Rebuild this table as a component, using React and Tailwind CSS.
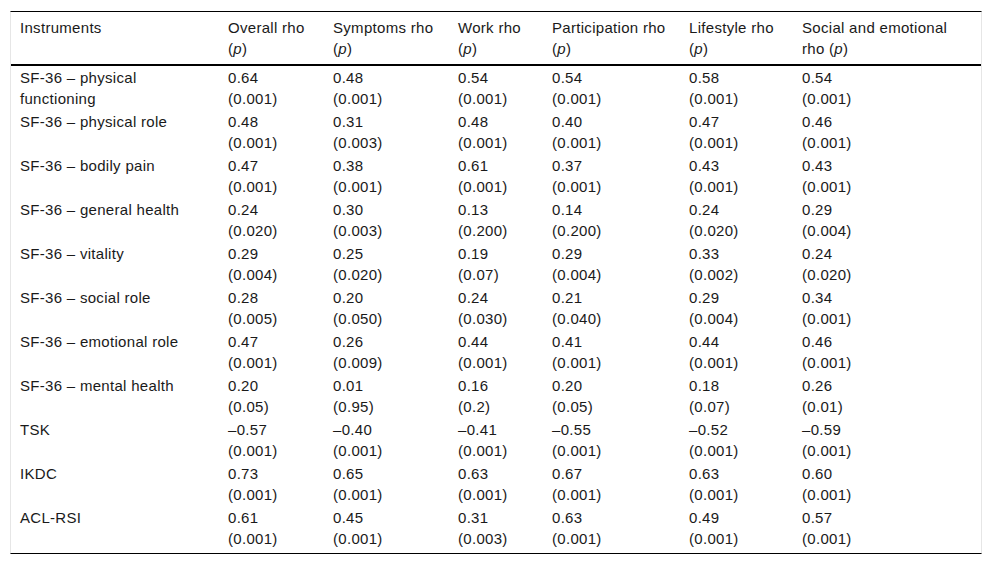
const headers = [
  ["Instruments", null],
  ["Overall rho", "("],
  ["Symptoms rho", "("],
  ["Work rho", "("],
  ["Participation rho", "("],
  ["Lifestyle rho", "("],
  ["Social and emotional", "rho ("],
];

const rows = [
  ["SF-36 – physical functioning", ["0.64", "(0.001)"], ["0.48", "(0.001)"], ["0.54", "(0.001)"], ["0.54", "(0.001)"], ["0.58", "(0.001)"], ["0.54", "(0.001)"]],
  ["SF-36 – physical role", ["0.48", "(0.001)"], ["0.31", "(0.003)"], ["0.48", "(0.001)"], ["0.40", "(0.001)"], ["0.47", "(0.001)"], ["0.46", "(0.001)"]],
  ["SF-36 – bodily pain", ["0.47", "(0.001)"], ["0.38", "(0.001)"], ["0.61", "(0.001)"], ["0.37", "(0.001)"], ["0.43", "(0.001)"], ["0.43", "(0.001)"]],
  ["SF-36 – general health", ["0.24", "(0.020)"], ["0.30", "(0.003)"], ["0.13", "(0.200)"], ["0.14", "(0.200)"], ["0.24", "(0.020)"], ["0.29", "(0.004)"]],
  ["SF-36 – vitality", ["0.29", "(0.004)"], ["0.25", "(0.020)"], ["0.19", "(0.07)"], ["0.29", "(0.004)"], ["0.33", "(0.002)"], ["0.24", "(0.020)"]],
  ["SF-36 – social role", ["0.28", "(0.005)"], ["0.20", "(0.050)"], ["0.24", "(0.030)"], ["0.21", "(0.040)"], ["0.29", "(0.004)"], ["0.34", "(0.001)"]],
  ["SF-36 – emotional role", ["0.47", "(0.001)"], ["0.26", "(0.009)"], ["0.44", "(0.001)"], ["0.41", "(0.001)"], ["0.44", "(0.001)"], ["0.46", "(0.001)"]],
  ["SF-36 – mental health", ["0.20", "(0.05)"], ["0.01", "(0.95)"], ["0.16", "(0.2)"], ["0.20", "(0.05)"], ["0.18", "(0.07)"], ["0.26", "(0.01)"]],
  ["TSK", ["–0.57", "(0.001)"], ["–0.40", "(0.001)"], ["–0.41", "(0.001)"], ["–0.55", "(0.001)"], ["–0.52", "(0.001)"], ["–0.59", "(0.001)"]],
  ["IKDC", ["0.73", "(0.001)"], ["0.65", "(0.001)"], ["0.63", "(0.001)"], ["0.67", "(0.001)"], ["0.63", "(0.001)"], ["0.60", "(0.001)"]],
  ["ACL-RSI", ["0.61", "(0.001)"], ["0.45", "(0.001)"], ["0.31", "(0.003)"], ["0.63", "(0.001)"], ["0.49", "(0.001)"], ["0.57", "(0.001)"]],
];

const widths = ["w-[208px]", "w-[105px]", "w-[125px]", "w-[94px]", "w-[137px]", "w-[113px]", "w-[188px]"];

const App = () => {
  return (
    <div className="min-h-screen bg-white px-[10px] pt-[11px] text-[15px] leading-[21px] tracking-[0.3px] text-[#1a1a1a]" style={{ fontFamily: '"Liberation Sans", Arial, sans-serif' }}>
      <div className="border-x border-[#e6e6e6] border-t border-t-black border-b border-b-black pb-[3px]">
        <table className="w-full table-fixed border-collapse">
          <colgroup>
            {widths.map((w, i) => <col key={i} className={w} />)}
          </colgroup>
          <thead>
            <tr className="border-b-2 border-black">
              {headers.map(([label, second], i) => (
                <th key={i} className="pl-[9px] pr-[10px] pt-[5px] pb-[5px] text-left align-top font-normal">
                  <div>{label}</div>
                  {second && <div>{second}<i>p</i>)</div>}
                </th>
              ))}
            </tr>
          </thead>
          <tbody>
            {rows.map(([name, ...vals], r) => (
              <tr key={r}>
                <td className="pl-[9px] pr-[24px] py-[1px] align-top">{name}</td>
                {vals.map(([v, p], i) => (
                  <td key={i} className="pl-[9px] pr-[10px] py-[1px] align-top">
                    <div>{v}</div>
                    <div>{p}</div>
                  </td>
                ))}
              </tr>
            ))}
          </tbody>
        </table>
      </div>
    </div>
  );
};

export default App;
